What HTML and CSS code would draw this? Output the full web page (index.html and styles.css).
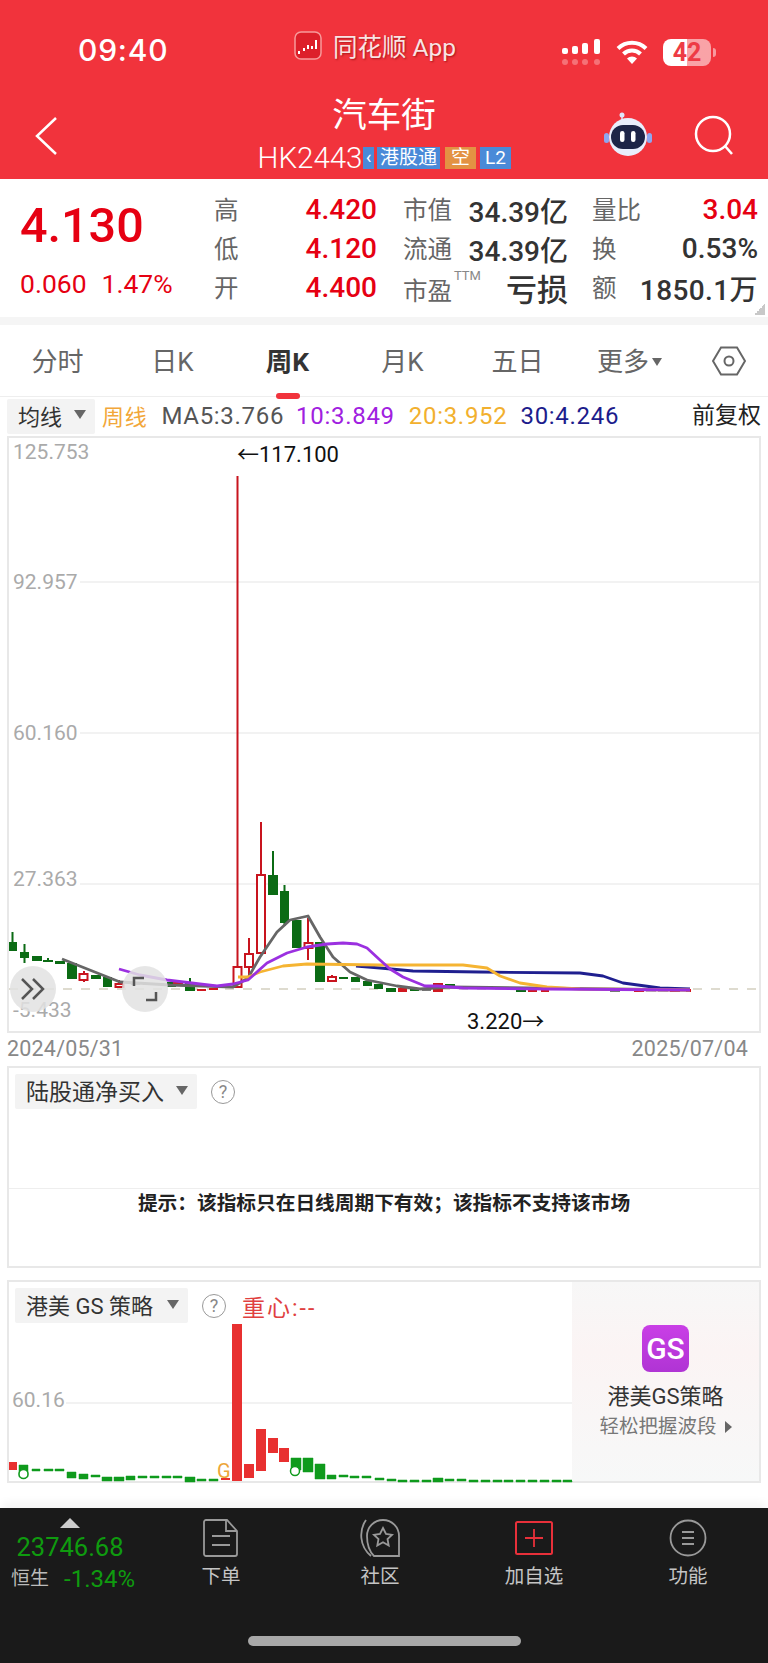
FILE: index.html
```html
<!DOCTYPE html>
<html lang="zh">
<head>
    <title>汽车街</title>
    <meta charset="UTF-8">
    <meta name="viewport" content="width=device-width, initial-scale=1.0">
    <link rel="stylesheet" href="styles.css">
</head>
<body>
<header class="top">
    <div class="status">
        <div class="time">09:40</div>
        <div class="app">
            <svg class="app-logo" viewBox="0 0 28 29">
                <rect x="1" y="1" width="26" height="27" rx="6" fill="#dd1f2a" stroke="#f79a9a" stroke-width="1.5"/>
                <path d="M4 20h2v3H4zM9 17h2v3H9zM13 14h2v4h-2zM17 15h2v3h-2zM21 9h2v9h-2z" fill="#fff"/>
            </svg>
            <span class="app-name">同花顺 App</span>
        </div>
        <div class="sys">
            <svg class="signal" viewBox="0 0 38 26">
                <rect x="0" y="9" width="6" height="6" rx="2" fill="#fff"/>
                <rect x="10" y="7" width="6" height="8" rx="2" fill="#fff"/>
                <rect x="20" y="4" width="6" height="11" rx="2" fill="#fff"/>
                <rect x="32" y="0" width="6" height="15" rx="2" fill="#fff"/>
                <g fill="#fff" opacity=".3">
                    <rect x="0" y="20" width="6" height="6" rx="3"/>
                    <rect x="10" y="20" width="6" height="6" rx="3"/>
                    <rect x="20" y="20" width="6" height="6" rx="3"/>
                    <rect x="32" y="20" width="6" height="6" rx="3"/>
                </g>
            </svg>
            <svg class="wifi" viewBox="0 0 32 24">
                <path d="M2 8.5a20 20 0 0 1 28 0M7.500 14a12 12 0 0 1 17 0" fill="none" stroke="#fff" stroke-width="4"/>
                <path d="M16 24l-5-5.500a7 7 0 0 1 10 0z" fill="#fff"/>
            </svg>
            <div class="battery">42</div>
            <div class="battery-tip"></div>
        </div>
    </div>
    <div class="nav">
        <svg class="back" viewBox="0 0 24 40"><path d="M22 2L3 20l19 18" fill="none" stroke="#fff" stroke-width="2.500"/></svg>
        <div class="title">
            <div class="name">汽车街</div>
            <div class="code-row">
                <span class="code">HK2443</span>
                <span class="tag tag-cut">‹</span>
                <span class="tag tag-hk">港股通</span>
                <span class="tag tag-short">空</span>
                <span class="tag tag-l2">L2</span>
            </div>
        </div>
        <div class="nav-right">
            <svg class="robot" viewBox="0 0 48 44">
                <circle cx="18" cy="3" r="2.500" fill="#dfe6fb"/>
                <path d="M18 4v6" stroke="#dfe6fb" stroke-width="1.500"/>
                <circle cx="24" cy="25" r="19" fill="#e9eefc"/>
                <rect x="0" y="21" width="5" height="10" rx="2.500" fill="#8ea6f0"/>
                <rect x="43" y="21" width="5" height="10" rx="2.500" fill="#8ea6f0"/>
                <rect x="7" y="13" width="34" height="24" rx="12" fill="#1d2447"/>
                <rect x="16" y="19" width="4.500" height="11" rx="2.200" fill="#fff"/>
                <rect x="27" y="19" width="4.500" height="11" rx="2.200" fill="#fff"/>
            </svg>
            <svg class="search" viewBox="0 0 40 40">
                <circle cx="19" cy="19" r="17" fill="none" stroke="#fff" stroke-width="2.500"/>
                <path d="M31 31l7 8" stroke="#fff" stroke-width="2.500"/>
            </svg>
        </div>
    </div>
</header>

<section class="stats">
    <div class="quote">
        <div class="price">4.130</div>
        <div class="change"><span>0.060</span><span>1.47%</span></div>
    </div>
    <div class="stat-grid">
        <span class="k">高</span><span class="v red">4.420</span>
        <span class="k k2">市值</span><span class="v">34.39亿</span>
        <span class="k k3">量比</span><span class="v red">3.04</span>
        <span class="k">低</span><span class="v red">4.120</span>
        <span class="k k2">流通</span><span class="v">34.39亿</span>
        <span class="k k3">换</span><span class="v">0.53%</span>
        <span class="k">开</span><span class="v red">4.400</span>
        <span class="k k2 ttm">市盈<sup>TTM</sup></span><span class="v big">亏损</span>
        <span class="k k3">额</span><span class="v wide">1850.1万</span>
    </div>
    <div class="corner"></div>
</section>
<div class="strip"></div>

<nav class="tabs">
    <span class="tab">分时</span>
    <span class="tab">日K</span>
    <span class="tab on">周K</span>
    <span class="tab">月K</span>
    <span class="tab">五日</span>
    <span class="tab more">更多<i class="caret small"></i></span>
    <svg class="hex" viewBox="0 0 34 30">
        <path d="M9 1.500h16L33 15l-8 13.500H9L1 15z" fill="none" stroke="#666" stroke-width="2"/>
        <circle cx="17" cy="15" r="4.500" fill="none" stroke="#666" stroke-width="2"/>
    </svg>
</nav>

<div class="ma-row">
    <span class="drop ma-drop">均线<i class="caret"></i></span>
    <span class="ma ma-week">周线</span>
    <span class="ma ma5">MA5:3.766</span>
    <span class="ma ma10">10:3.849</span>
    <span class="ma ma20">20:3.952</span>
    <span class="ma ma30">30:4.246</span>
    <span class="adjust">前复权</span>
</div>

<div class="chart-box">
    <svg class="kline" width="750" height="593" viewBox="9 438 750 593">
        <path class="grid" d="M80 582H759M80 733H759M80 884H759"/>
        <path class="base" d="M9 989H759"/>
        <text class="axis" x="13" y="459">125.753</text>
        <text class="axis" x="13" y="589">92.957</text>
        <text class="axis" x="13" y="740">60.160</text>
        <text class="axis" x="13" y="886">27.363</text>
        <text class="axis" x="13" y="1017">-5.433</text>
        <text class="mark" x="237" y="462">←117.100</text>
        <text class="mark" x="467" y="1029">3.220→</text>

        <path class="wick-g" d="M12.500 932V942M24.500 944V963M48 958V960M190 978V983M273 851V875M284.500 885V926"/>
        <path class="body-g" d="M9 942h8v9h-8zM20 952h9v6h-9zM32 956h10v5H32zM43 960h10v2H43zM55 961h10v3H55zM67 963h10v16H67zM91 975h10v4H91zM103 977h9v10h-9zM167 982h9v5h-9zM185 983h10v8h-10zM268 875h10v20h-10zM280 891h9v32h-9zM292 920h9.500v28H292zM315 942h10v40h-10zM339 977h9v2h-9zM351 977h9v5h-9zM363 981h9v5h-9zM374 984h9v5h-9zM386 988h10v4h-10zM410 988h9v3h-9zM445 984h10v3h-10zM457 986h10v2h-10zM516 990h10v2h-10z"/>
        <path class="body-gray" d="M422 989h9v2h-9zM610 990h10v2h-10zM646 990h10v1.500h-10zM658 990h10v1.500h-10zM131 983h9v2h-9zM222 986h9v1.500h-9z"/>
        <path class="body-r" d="M173 982h10v2h-10zM197 989h9v2h-9zM209 988h9v2h-9zM398 988h9v4h-9zM433 989h10v3h-10zM528 990h9v2h-9zM541 990h8v2h-8zM634 990h10v2h-10zM670 990h10v2h-10zM686 989h5v3h-5zM143 983h9v2h-9zM155 983h9v2h-9z"/>
        <path class="wick-r" d="M84 971V982M119 980V984M237.500 476V967M249 938V977M261 822V875M308 918V960M332 975V977"/>
        <path class="hollow" d="M79.500 974h8v6h-8zM115.500 984h8v3h-8zM233.500 967h8v20h-8zM245 954h8v13h-8zM257 875h8v78h-8zM304.500 943h8v5h-8zM328 977h8v4h-8zM434 984h8v4h-8z"/>

        <path class="line l5" d="M62 959L120 982L170 985L233 987L248 978L260 957L277 932L290 920L308 916L320 937L333 957L350 972L367 980L397 986L420 989L450 987L690 990"/>
        <path class="line l30" d="M356 966L380 968L413 971L480 972L580 973L603 976L623 983L660 988L690 989"/>
        <path class="line l20" d="M238 977H248L260 972L283 966L307 964L380 965L463 965L487 968L500 976L520 983L547 987L580 989L690 990"/>
        <path class="line l10" d="M119 969L140 975L167 980L200 984L217 986L233 984L248 980L267 963L287 953L307 947L327 944L343 943L357 944L367 948L380 960L390 969L403 977L425 986L438 986L463 988L547 989L690 990"/>
    </svg>
    <div class="round-btn btn-more">
        <svg viewBox="0 0 26 24" width="26" height="24"><path d="M2 2l10 10L2 22M13 2l10 10-10 10" fill="none" stroke="#555" stroke-width="2.500"/></svg>
    </div>
    <div class="round-btn btn-full">
        <svg viewBox="0 0 26 26" width="26" height="26"><path d="M12 2H2v8M14 24h10v-8" fill="none" stroke="#555" stroke-width="2.500"/></svg>
    </div>
</div>

<div class="dates"><span>2024/05/31</span><span>2025/07/04</span></div>

<section class="panel panel-north">
    <div class="panel-head">
        <span class="drop">陆股通净买入<i class="caret"></i></span>
        <span class="help">?</span>
    </div>
    <div class="tip">提示&#xFF1A;该指标只在日线周期下有效&#xFF1B;该指标不支持该市场</div>
</section>

<section class="panel panel-gs">
    <div class="gs-left">
        <div class="panel-head">
            <span class="drop">港美 GS 策略<i class="caret"></i></span>
            <span class="help">?</span>
            <span class="focus">重心:--</span>
        </div>
        <svg class="gs-chart" width="563" height="158" viewBox="9 1323 563 158">
            <path class="grid" d="M66 1403H572"/>
            <text class="axis" x="12" y="1407">60.16</text>
            <path class="gs-g" d="M19 1465h9v12h-9zM32 1469h8v2h-8zM44 1469h9v2h-9zM55 1469h9v2h-9zM67 1472h9v6h-9zM79 1474h9v5h-9zM91 1475h9v2h-9zM102 1477h10v4h-10zM114 1477h10v4h-10zM126 1476h9v4h-9zM138 1476h9v2h-9zM150 1476h9v2h-9zM162 1476h9v2h-9zM173 1476h9v2h-9zM185 1477h10v5h-10zM197 1479h9v2h-9zM209 1479h9v2h-9zM291 1458h10v12h-10zM303 1458h10v14h-10zM315 1464h10v15h-10zM327 1475h9v4h-9zM339 1475h9v2h-9zM350 1476h9v2h-9zM362 1476h9v2h-9zM375 1478h9v2h-9zM387 1479h9v2h-9zM398 1480h9v2h-9zM410 1480h9v2h-9zM422 1480h9v2h-9zM433 1478h10v4h-10zM445 1479h9v2h-9zM457 1479h9v2h-9zM469 1480h9v2h-9zM481 1480h9v2h-9zM493 1480h9v2h-9zM504 1480h9v2h-9zM516 1480h9v2h-9zM528 1480h9v2h-9zM540 1480h9v2h-9zM552 1480h9v2h-9zM563 1480h9v2h-9z"/>
            <path class="gs-r" d="M9 1462h8v8H9zM221 1478h9v2h-9zM232 1324h10v157h-10zM244 1464h10v14h-10zM256 1429h10v42h-10zM268 1438h10v15h-10zM279 1448h10v14h-10z"/>
            <circle class="gs-ring" cx="23.500" cy="1474" r="4.500"/>
            <circle class="gs-ring" cx="295" cy="1471" r="4.500"/>
            <text class="gs-flag" x="217" y="1478">G</text>
        </svg>
    </div>
    <div class="promo">
        <div class="promo-icon">GS</div>
        <div class="promo-title">港美GS策略</div>
        <div class="promo-sub">轻松把握波段<i class="caret-right"></i></div>
    </div>
</section>

<footer class="bottom">
    <div class="index">
        <i class="index-up"></i>
        <div class="index-value">23746.68</div>
        <div class="index-row"><span class="index-name">恒生</span><span class="index-pct">-1.34%</span></div>
    </div>
    <div class="bar-item">
        <svg viewBox="0 0 36 38" width="36" height="38">
            <path d="M3 1h21l10 11v23a2 2 0 0 1-2 2H3a2 2 0 0 1-2-2V3a2 2 0 0 1 2-2zM23 1v11h11M9 17h18M9 26h18" fill="none" stroke="#999" stroke-width="1.800"/>
        </svg>
        <span>下单</span>
    </div>
    <div class="bar-item">
        <svg viewBox="0 0 42 38" width="42" height="38">
            <path d="M7 1C0 11 0 27 12 37M15 37C9 31 8 24 8 17a16 16 0 0 1 32 0v20z" fill="none" stroke="#999" stroke-width="1.800"/>
            <path d="M24 9l3 6 6 .8-4.500 4.200 1.200 6.500-5.700-3.300-5.700 3.300 1.200-6.500L15 15.800l6-.8z" fill="none" stroke="#999" stroke-width="1.800"/>
        </svg>
        <span>社区</span>
    </div>
    <div class="bar-item">
        <svg viewBox="0 0 38 38" width="38" height="38">
            <rect x="1" y="3" width="36" height="32" rx="1.500" fill="none" stroke="#e8303a" stroke-width="2"/>
            <path d="M19 10v18M10 19h18" stroke="#e8303a" stroke-width="1.800"/>
        </svg>
        <span>加自选</span>
    </div>
    <div class="bar-item">
        <svg viewBox="0 0 38 38" width="38" height="38">
            <circle cx="19" cy="19" r="17.500" fill="none" stroke="#999" stroke-width="1.800"/>
            <path d="M13 13h12M13 19h12M13 25h12" stroke="#999" stroke-width="2"/>
        </svg>
        <span>功能</span>
    </div>
    <div class="home-bar"></div>
</footer>
</body>
</html>
```
FILE: styles.css
```css
* {
  box-sizing: border-box;
}
html,
body {
  margin: 0;
  width: 768px;
  height: 1663px;
  overflow: hidden;
}
body {
  background: #fff;
  font-family: Roboto, "Noto Sans CJK SC", sans-serif;
  color: #333;
}

/* red header */
.top {
  height: 179px;
  background: #f1333c;
  color: #fff;
}
.status {
  display: grid;
  grid-template-columns: 294px 268px 1fr;
  height: 92px;
  align-items: center;
}
.time {
  padding-left: 78px;
  font-family: Inter, sans-serif;
  font-size: 30px;
  font-weight: 500;
  letter-spacing: 0.8px;
  padding-top: 8px;
}
.app {
  display: flex;
  align-items: center;
  gap: 11px;
  padding-bottom: 2px;
}
.app-logo {
  width: 28px;
  height: 29px;
}
.app-name {
  font-size: 24.500px;
  color: #f8e4e4;
  text-shadow: 1px 1px 2px rgba(120, 0, 0, 0.6);
  white-space: nowrap;
}
.sys {
  display: flex;
  align-items: center;
  padding-top: 12px;
}
.signal {
  width: 38px;
  height: 26px;
}
.wifi {
  width: 32px;
  height: 24px;
  margin-left: 16px;
}
.battery {
  width: 48px;
  height: 27px;
  margin-left: 15px;
  border-radius: 8px;
  background: linear-gradient(to right, #fff 50%, rgba(255, 255, 255, 0.55) 50%);
  color: #ee3b45;
  font-size: 25px;
  font-weight: 700;
  line-height: 27px;
  text-align: center;
}
.battery-tip {
  width: 3px;
  height: 9px;
  margin-left: 2px;
  border-radius: 0 3px 3px 0;
  background: rgba(255, 255, 255, 0.5);
}
.nav {
  display: grid;
  grid-template-columns: 1fr auto 1fr;
  height: 87px;
}
.back {
  width: 24px;
  height: 40px;
  margin: 24px 0 0 34px;
}
.title {
  width: 260px;
  text-align: center;
}
.name {
  height: 46px;
  font-size: 34.500px;
  font-weight: 400;
  line-height: 46px;
}
.code-row {
  display: flex;
  align-items: center;
  justify-content: center;
  height: 24px;
  margin-top: 8px;
}
.code {
  width: 106px;
  font-size: 29.500px;
  font-weight: 300;
  white-space: nowrap;
}
.tag {
  height: 22px;
  font-size: 19px;
  line-height: 22px;
  color: #fff;
  text-align: center;
  background: #4a8ad8;
}
.tag-cut {
  width: 11px;
  line-height: 19px;
}
.tag-hk {
  width: 63px;
  margin-left: 3px;
  white-space: nowrap;
}
.tag-short {
  width: 31px;
  margin-left: 5px;
  background: #e39243;
}
.tag-l2 {
  width: 31px;
  margin-left: 4px;
}
.nav-right {
  display: flex;
  justify-content: flex-end;
  padding: 20px 34px 0 0;
  gap: 42px;
}
.robot {
  width: 48px;
  height: 44px;
}
.search {
  width: 40px;
  height: 40px;
  margin-top: 3px;
}

/* quote block */
.stats {
  position: relative;
  display: flex;
  height: 138px;
}
.quote {
  width: 214px;
  padding-left: 20px;
  color: #e60012;
}
.price {
  height: 76px;
  padding-top: 12px;
  font-size: 48.500px;
  font-weight: 500;
  line-height: 70px;
}
.change {
  display: flex;
  gap: 15px;
  margin-top: 2px;
  font-size: 26.500px;
  line-height: 54px;
}
.stat-grid {
  display: grid;
  grid-template-columns: 40px 123px 79px 112px 77px 113px;
  grid-auto-rows: 39px;
  align-items: center;
  padding-top: 11px;
}
.k {
  position: relative;
  font-size: 24.500px;
  color: #666;
  white-space: nowrap;
  margin-top: -3px;
}
.k2 {
  padding-left: 26px;
}
.k3 {
  padding-left: 24px;
}
.ttm {
  margin-top: 0;
  padding-top: 4px;
}
.ttm sup {
  position: absolute;
  left: 77px;
  top: 0;
  font-size: 13px;
  color: #888;
}
.v {
  justify-self: end;
  font-size: 28px;
  font-weight: 500;
  color: #333;
  white-space: nowrap;
}
.red {
  color: #e60012;
}
.big {
  font-size: 31px;
}
.wide {
  letter-spacing: 0.4px;
}
.corner {
  position: absolute;
  right: 3px;
  bottom: 2px;
  width: 11px;
  height: 11px;
  background: linear-gradient(135deg, transparent 50%, #c8c8c8 50%);
}
.strip {
  height: 8px;
  background: #f5f5f5;
}

/* period tabs */
.tabs {
  display: grid;
  grid-template-columns: repeat(6, 115px) 1fr;
  align-items: center;
  height: 72px;
  border-bottom: 1px solid #eee;
}
.tab {
  position: relative;
  padding-top: 2px;
  font-size: 26px;
  line-height: 34px;
  color: #666;
  text-align: center;
}
.tab.on {
  font-weight: 700;
  font-size: 26.500px;
  color: #333;
}
.tab.on::after {
  content: "";
  position: absolute;
  left: 46px;
  top: 50px;
  width: 24px;
  height: 6px;
  border-radius: 3px;
  background: #f1333c;
}
.more {
  padding-right: 6px;
}
.hex {
  width: 34px;
  height: 30px;
  justify-self: center;
}
.caret {
  display: inline-block;
  margin-left: 12px;
  vertical-align: middle;
  border-left: 6px solid transparent;
  border-right: 6px solid transparent;
  border-top: 9px solid #666;
}
.caret.small {
  margin-left: 3px;
  margin-bottom: 4px;
  border-left-width: 5px;
  border-right-width: 5px;
  border-top-width: 8px;
}

/* moving average row */
.ma-row {
  display: flex;
  align-items: center;
  height: 39px;
  padding: 0 7px 1px;
}
.drop {
  display: inline-flex;
  align-items: center;
  height: 35px;
  padding: 0 9px 3px 11px;
  background: #f3f3f3;
  border-radius: 2px;
  font-size: 23px;
  color: #333;
  white-space: nowrap;
}
.ma-drop {
  width: 88px;
  font-size: 22px;
}
.ma {
  font-size: 24px;
  letter-spacing: 0.7px;
  white-space: nowrap;
}
.ma-week {
  margin-left: 7px;
  font-size: 22px;
  color: #f2a73a;
  padding-bottom: 2px;
}
.ma5 {
  margin-left: 14px;
  color: #555;
}
.ma10 {
  margin-left: 12px;
  color: #a020e0;
}
.ma20 {
  margin-left: 14px;
  color: #f2b02e;
}
.ma30 {
  margin-left: 13px;
  color: #1c1c8c;
}
.adjust {
  margin-left: auto;
  font-size: 23px;
  line-height: 30px;
  color: #222;
}

/* kline chart */
.chart-box {
  position: relative;
  width: 754px;
  height: 597px;
  margin-left: 7px;
  border: 2px solid #e8e8e8;
}
.kline,
.gs-chart {
  display: block;
  overflow: visible;
}
.grid {
  fill: none;
  stroke: #eee;
  stroke-width: 1.500;
}
.base {
  fill: none;
  stroke: #d4cfc0;
  stroke-width: 1.500;
  stroke-dasharray: 9 9;
}
.axis {
  font-size: 21px;
  fill: #aaa;
}
.mark {
  font-size: 22px;
  fill: #111;
}
.body-g {
  fill: #0b6b14;
}
.body-gray {
  fill: #777;
}
.body-r {
  fill: #d01820;
}
.wick-g {
  fill: none;
  stroke: #0b6b14;
  stroke-width: 2;
}
.wick-r {
  fill: none;
  stroke: #c8141e;
  stroke-width: 2;
}
.hollow {
  fill: #fff;
  stroke: #c8141e;
  stroke-width: 2;
}
.line {
  fill: none;
  stroke-width: 2.800;
  stroke-linejoin: round;
}
.l5 {
  stroke: #666;
}
.l10 {
  stroke: #9b30e0;
}
.l20 {
  stroke: #f5b432;
}
.l30 {
  stroke: #1f1f8f;
}
.round-btn {
  position: absolute;
  display: flex;
  align-items: center;
  justify-content: center;
  width: 46px;
  height: 46px;
  border-radius: 50%;
  background: rgba(226, 226, 226, 0.85);
}
.btn-more {
  left: 1px;
  top: 528px;
}
.btn-full {
  left: 113px;
  top: 528px;
}
.dates {
  display: flex;
  justify-content: space-between;
  height: 33px;
  padding: 0 20px 0 7px;
  font-size: 21.500px;
  line-height: 32px;
  color: #888;
  letter-spacing: 0.2px;
}

/* indicator panels */
.panel {
  width: 754px;
  margin-left: 7px;
  border: 2px solid #e8e8e8;
}
.panel-north {
  height: 202px;
}
.panel-head {
  display: flex;
  align-items: center;
  gap: 14px;
  height: 41px;
  padding: 6px 0 0 6px;
}
.help {
  width: 24px;
  height: 24px;
  border: 1.500px solid #999;
  border-radius: 50%;
  font-size: 18px;
  line-height: 21px;
  color: #888;
  text-align: center;
}
.tip {
  margin-top: 79px;
  padding-top: 2px;
  border-top: 1.500px solid #eee;
  font-size: 19.700px;
  font-weight: 700;
  line-height: 26px;
  color: #222;
  text-align: center;
}
.panel-gs {
  display: flex;
  height: 203px;
  margin-top: 12px;
}
.gs-left {
  width: 563px;
}
.panel-gs .drop {
  width: 173px;
  font-size: 22px;
}
.panel-gs .caret {
  margin-left: auto;
}
.focus {
  margin-left: 2px;
  font-size: 23px;
  letter-spacing: 2px;
  color: #e04040;
  white-space: nowrap;
}
.gs-g {
  fill: #0f9a1c;
  stroke: #0f9a1c;
  stroke-width: 0.500;
}
.gs-r {
  fill: #e83030;
}
.gs-ring {
  fill: #fff;
  stroke: #0f9a1c;
  stroke-width: 1.500;
}
.gs-flag {
  font-size: 20px;
  fill: #eda63a;
}
.promo {
  display: flex;
  flex-direction: column;
  align-items: center;
  width: 187px;
  padding-top: 43px;
  background: linear-gradient(#f7f7f7, #fbf4f4 35%, #f7f8f8);
}
.promo-icon {
  width: 47px;
  height: 47px;
  border-radius: 8px;
  background: linear-gradient(#c93fe6, #b034d4);
  color: #fff;
  font-size: 30px;
  font-weight: 500;
  line-height: 47px;
  text-align: center;
}
.promo-title {
  margin-top: 9px;
  font-size: 22px;
  line-height: 32px;
  color: #333;
}
.promo-sub {
  font-size: 19.500px;
  line-height: 27px;
  color: #777;
  white-space: nowrap;
}
.caret-right {
  display: inline-block;
  margin-left: 8px;
  border-top: 6px solid transparent;
  border-bottom: 6px solid transparent;
  border-left: 7px solid #666;
}

/* bottom bar */
.bottom {
  position: relative;
  display: grid;
  grid-template-columns: 142px 158px 160px 148px 160px;
  height: 155px;
  margin-top: 25px;
  background: #1a1a1a;
  box-shadow: 0 -8px 8px -2px #f5f5f5;
}
.index {
  padding-top: 10px;
  text-align: center;
}
.index-up {
  display: block;
  width: 0;
  margin: 0 0 0 60px;
  border-left: 10px solid transparent;
  border-right: 10px solid transparent;
  border-bottom: 10px solid #ccc;
}
.index-value {
  width: 140px;
  font-size: 25.500px;
  line-height: 38px;
  color: #0f9b0f;
}
.index-row {
  display: flex;
  align-items: center;
  gap: 15px;
  padding-left: 11px;
  margin-top: -2px;
  line-height: 30px;
}
.index-name {
  font-size: 19px;
  color: #bbb;
}
.index-pct {
  font-size: 24px;
  color: #0f9b0f;
}
.bar-item {
  display: flex;
  flex-direction: column;
  align-items: center;
  padding-top: 11px;
  font-size: 19.500px;
  color: #c4c4c4;
}
.bar-item span {
  margin-top: 6px;
  line-height: 28px;
}
.home-bar {
  position: absolute;
  left: 248px;
  top: 128px;
  width: 273px;
  height: 10px;
  border-radius: 5px;
  background: #a8a8a8;
}
```
